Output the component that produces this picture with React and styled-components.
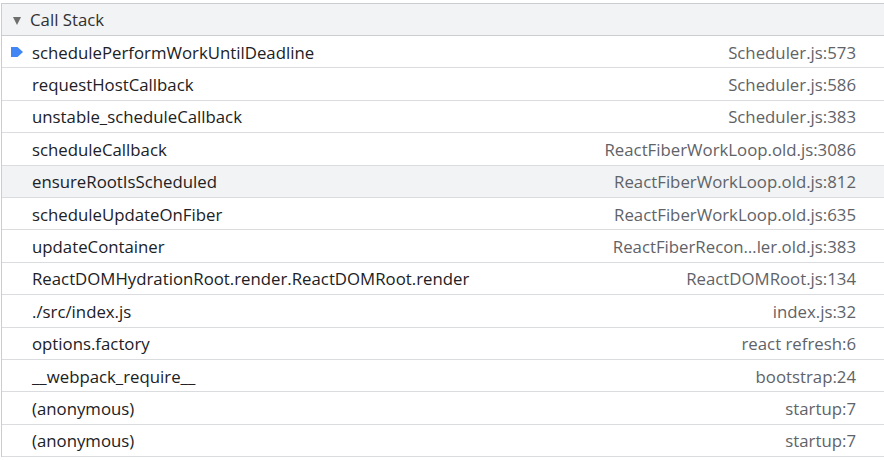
import React from 'react'
import styled, { createGlobalStyle } from 'styled-components'

const Global = createGlobalStyle`
    body {
        margin: 0;
        background: #fff;
        font-family: "Segoe UI", "Open Sans", "Noto Sans", sans-serif;
    }
`

const Pane = styled.div`
    width: 884px;
    height: 460px;
    padding-top: 3px;
    box-sizing: border-box;
    overflow: hidden;
`

const Section = styled.div`
    border-left: 1px solid #cacdd1;
    margin-left: 1px;
`

const Header = styled.div`
    height: 31px;
    display: flex;
    align-items: center;
    gap: 9px;
    padding-left: 11px;
    background: #f1f3f4;
    border-top: 1px solid #cacdd1;
    border-bottom: 1px solid #cacdd1;
    color: #303030;
    font-size: 16.8px;
`

const Triangle = styled.span`
    width: 0;
    height: 0;
    margin-top: 2px;
    border-left: 4.5px solid transparent;
    border-right: 4.5px solid transparent;
    border-top: 8px solid #6e6e6e;
`

const Frame = styled.div`
    display: flex;
    align-items: center;
    justify-content: space-between;
    height: 32.4px;
    box-sizing: border-box;
    padding: 1px 28px 0 30px;
    position: relative;
    border-bottom: 1px solid #dadce0;
    font-size: 16.8px;
    background: ${props => props.$selected ? '#f1f3f4' : '#fff'};
    .name {
        color: #202124;
        white-space: nowrap;
    }
    .loc {
        color: #5f6368;
        white-space: nowrap;
    }
    svg {
        position: absolute;
        left: 9px;
        top: 50%;
        transform: translateY(-50%);
    }
`

const frames = [
    ['schedulePerformWorkUntilDeadline', 'Scheduler.js:573'],
    ['requestHostCallback', 'Scheduler.js:586'],
    ['unstable_scheduleCallback', 'Scheduler.js:383'],
    ['scheduleCallback', 'ReactFiberWorkLoop.old.js:3086'],
    ['ensureRootIsScheduled', 'ReactFiberWorkLoop.old.js:812'],
    ['scheduleUpdateOnFiber', 'ReactFiberWorkLoop.old.js:635'],
    ['updateContainer', 'ReactFiberRecon\u2026ler.old.js:383'],
    ['ReactDOMHydrationRoot.render.ReactDOMRoot.render', 'ReactDOMRoot.js:134'],
    ['./src/index.js', 'index.js:32'],
    ['options.factory', 'react refresh:6'],
    ['__webpack_require__', 'bootstrap:24'],
    ['(anonymous)', 'startup:7'],
    ['(anonymous)', 'startup:7'],
]

export default function App() {
    return (
        <Pane>
            <Global />
            <Section>
                <Header>
                    <Triangle />
                    <span>Call Stack</span>
                </Header>
                {frames.map(([name, loc], i) => (
                    <Frame key={i} $selected={i === 4}>
                        {i === 0 && (
                            <svg width="12" height="13" viewBox="0 0 12 13">
                                <path d="M0 1.5h6.5L12 6.5 6.5 11.5H0z" fill="#4285f4" />
                            </svg>
                        )}
                        <span className='name'>{name}</span>
                        <span className='loc'>{loc}</span>
                    </Frame>
                ))}
            </Section>
        </Pane>
    )
}
